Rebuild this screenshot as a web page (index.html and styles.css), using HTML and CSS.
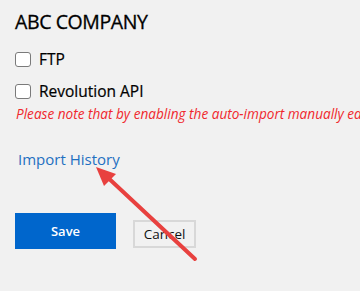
FILE: index.html
```html
<!DOCTYPE html>
<html>
<head>
<meta charset="utf-8">
<link rel="stylesheet" href="styles.css">
</head>
<body>
<div class="page">
  <h1 class="title">ABC COMPANY</h1>
  <label class="check"><span class="box"></span><span>FTP</span></label>
  <label class="check"><span class="box"></span><span>Revolution API</span></label>
  <p class="note">Please note that by enabling the auto-import manually edited data will be overwritten</p>
  <a class="link" href="#">Import History</a>
  <div class="actions">
    <button class="btn-save">Save</button>
    <button class="btn-cancel">Cancel</button>
  </div>
</div>
<svg class="arrow" width="360" height="291" viewBox="0 0 360 291">
  <line x1="195" y1="259" x2="104" y2="174" stroke="#e8413f" stroke-width="4" stroke-linecap="round"/>
  <polygon points="96,167 116,174 104,186" fill="#e8413f"/>
</svg>
</body>
</html>
```
FILE: styles.css
```css
html, body {
  margin: 0;
  padding: 0;
  background: #f1f1f1;
  overflow: hidden;
}
body {
  width: 360px;
  height: 291px;
  position: relative;
  font-family: "Open Sans", "Noto Sans", sans-serif;
  color: #111;
}
.page {
  padding: 6px 0 0 15px;
}
.title {
  margin: 0;
  font-size: 19.5px;
  font-weight: 400;
  line-height: 32px;
  letter-spacing: -0.4px;
  color: #000;
  -webkit-text-stroke: 0.3px #000;
}
.check {
  display: flex;
  align-items: center;
  gap: 8px;
  font-size: 15.5px;
  height: 16px;
  color: #000;
  -webkit-text-stroke: 0.2px #000;
}
.title + .check { margin-top: 13px; }
.check + .check { margin-top: 16px; }
.box {
  width: 14px;
  height: 13px;
  border: 1.5px solid #7a7a7a;
  border-radius: 3px;
  background: #fff;
}
.note {
  margin: 6px 0 0 1px;
  white-space: nowrap;
  font-style: italic;
  font-size: 13.6px;
  color: #f0282d;
  line-height: 18px;
}
.link {
  display: block;
  margin: 26px 0 0 3px;
  font-size: 15px;
  color: #1f70c1;
  text-decoration: none;
  line-height: 20px;
}
.actions {
  display: flex;
  align-items: center;
  gap: 17px;
  margin-top: 44px;
}
.btn-save {
  width: 101px;
  height: 36px;
  border: none;
  background: #0066cc;
  color: #fff;
  font-family: inherit;
  font-weight: 600;
  font-size: 13px;
  padding: 0;
}
.btn-cancel {
  width: 63px;
  height: 28px;
  margin-top: 5px;
  border: 2px solid #d8d8d8;
  background: #f1f1f1;
  color: #111;
  font-family: inherit;
  font-size: 13.5px;
  padding: 0;
}
.arrow {
  position: absolute;
  left: 0;
  top: 0;
}
```
